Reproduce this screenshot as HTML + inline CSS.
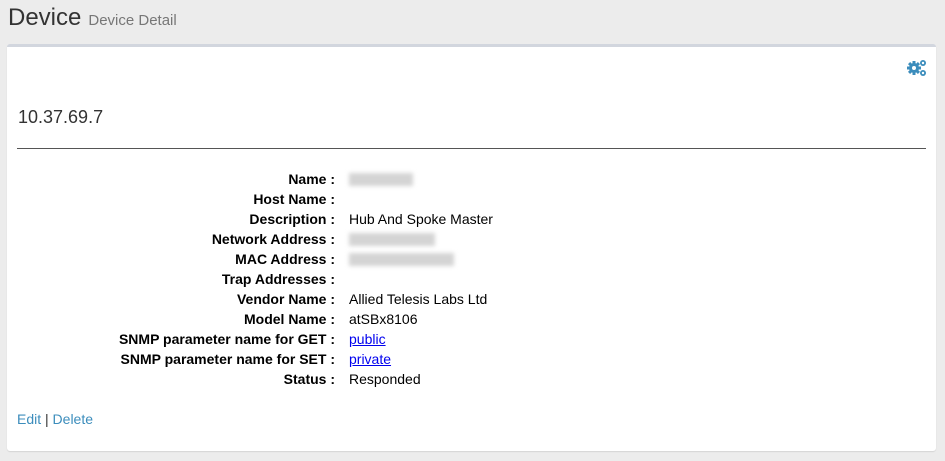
<!DOCTYPE html>
<html><head><style>
body{margin:0;background:#ececec;font-family:"Liberation Sans",Arial,sans-serif;width:945px;height:461px;overflow:hidden;position:relative}
.h{position:absolute;left:8px;top:4px;font-size:24px;color:#333}
.h small{font-size:15px;color:#777;margin-left:7px}
.panel{position:absolute;left:7px;top:44px;width:929px;height:404px;background:#fff;border-top:3px solid #d2d6de;border-radius:3px;box-shadow:0 1px 1px rgba(0,0,0,.1)}
.ip{position:absolute;left:11px;top:60px;font-size:18px;color:#333}
.hr{position:absolute;left:10px;top:101px;width:909px;height:1px;background:#555}
.row{position:absolute;left:0;height:20px;font-size:14px;line-height:20px;color:#000}
.l{position:absolute;left:0;width:328px;text-align:right;font-weight:bold}
.v{position:absolute;left:342px;white-space:nowrap}
.blur{display:inline-block;height:13px;margin-top:4px;background:#d4d4d4;filter:blur(2px)}
a{color:#00e;text-decoration:underline}
.ed{position:absolute;left:10px;top:364px;font-size:14px;color:#333}
.ed span{color:#3c8dbc}
</style></head><body>
<div class="h">Device<small>Device Detail</small></div>
<div class="panel">
<svg style="position:absolute;left:900px;top:13px" width="20" height="16" viewBox="0 0 20 16"><g fill="#3c8dbc"><circle cx="7" cy="8" r="5"/><rect x="5.5" y="1" width="3" height="14"/><rect x="0" y="6.5" width="14" height="3"/><rect x="5.5" y="1" width="3" height="14" transform="rotate(45 7 8)"/><rect x="5.5" y="1" width="3" height="14" transform="rotate(-45 7 8)"/><circle cx="16" cy="3" r="3"/><circle cx="16" cy="13" r="3"/></g><circle cx="7" cy="8" r="2" fill="#fff"/><circle cx="16" cy="3" r="1.2" fill="#fff"/><circle cx="16" cy="13" r="1.2" fill="#fff"/></svg>
<div class="ip">10.37.69.7</div>
<div class="hr"></div>
<div class="row" style="top:122px"><span class="l">Name :</span><span class="v"><span class="blur" style="width:64px"></span></span></div>
<div class="row" style="top:142px"><span class="l">Host Name :</span></div>
<div class="row" style="top:162px"><span class="l">Description :</span><span class="v">Hub And Spoke Master</span></div>
<div class="row" style="top:182px"><span class="l">Network Address :</span><span class="v"><span class="blur" style="width:86px"></span></span></div>
<div class="row" style="top:202px"><span class="l">MAC Address :</span><span class="v"><span class="blur" style="width:105px"></span></span></div>
<div class="row" style="top:222px"><span class="l">Trap Addresses :</span></div>
<div class="row" style="top:242px"><span class="l">Vendor Name :</span><span class="v">Allied Telesis Labs Ltd</span></div>
<div class="row" style="top:262px"><span class="l">Model Name :</span><span class="v">atSBx8106</span></div>
<div class="row" style="top:282px"><span class="l">SNMP parameter name for GET :</span><span class="v"><a>public</a></span></div>
<div class="row" style="top:302px"><span class="l">SNMP parameter name for SET :</span><span class="v"><a>private</a></span></div>
<div class="row" style="top:322px"><span class="l">Status :</span><span class="v">Responded</span></div>
<div class="ed"><span>Edit</span> | <span>Delete</span></div>
</div>
</body></html>
